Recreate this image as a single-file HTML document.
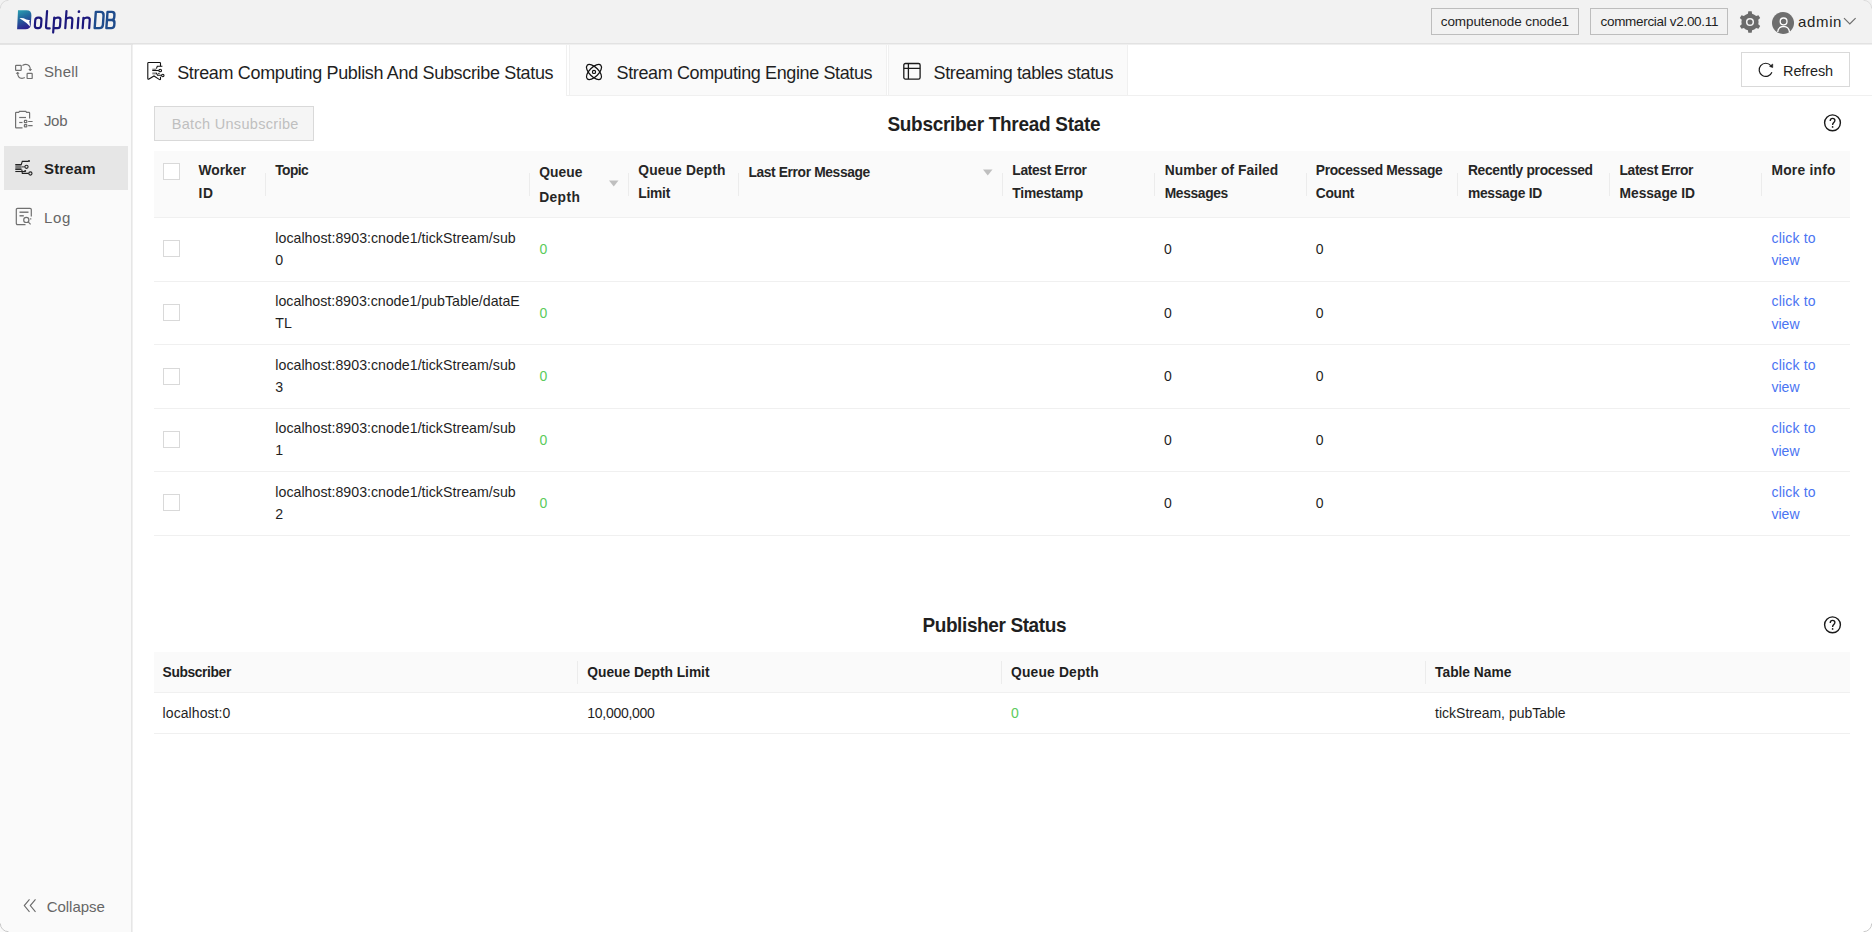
<!DOCTYPE html><html><head><meta charset='utf-8'><style>
*{box-sizing:border-box;margin:0;padding:0}
html,body{width:1872px;height:932px;overflow:hidden;background:#fff;font-family:"Liberation Sans",sans-serif;color:#1f1f1f}
.a{position:absolute}
.t{position:absolute;white-space:nowrap;line-height:1;font-family:"Liberation Sans",sans-serif}
svg{position:absolute;overflow:visible}
</style></head><body>
<div class=a style="left:0;top:0;width:1872px;height:43px;background:#f2f2f2"></div>
<div class=a style="left:0;top:43px;width:1872px;height:1px;background:#e2e2e2"></div>
<div class=a style="left:1431px;top:8px;width:148px;height:27px;border:1px solid #bdbdbd"></div>
<div class=a style="left:1590px;top:8px;width:138px;height:27px;border:1px solid #bdbdbd"></div>
<div class=a style="left:0;top:44px;width:131px;height:888px;background:#fafafa"></div>
<div class=a style="left:131px;top:44px;width:1px;height:888px;background:#e6e6e6"></div>
<div class=a style="left:132px;top:45px;width:1px;height:887px;background:#f0f0f0"></div>
<div class=a style="left:4px;top:146px;width:124px;height:44px;background:#e6e6e6"></div>
<div class=a style="left:566px;top:95px;width:1306px;height:1px;background:#f0f0f0"></div>
<div class=a style="left:566px;top:44px;width:1px;height:52px;background:#f0f0f0"></div>
<div class=a style="left:569px;top:44px;width:318px;height:52px;background:#fafafa;border:1px solid #f0f0f0"></div>
<div class=a style="left:888px;top:44px;width:240px;height:52px;background:#fafafa;border:1px solid #f0f0f0"></div>
<div class=a style="left:1741px;top:52px;width:109px;height:35px;border:1px solid #d9d9d9;background:#fff"></div>
<div class=a style="left:0;top:44px;width:133px;height:1px;background:#e4e4e4"></div>
<div class=a style="left:133px;top:44px;width:1739px;height:1px;background:#efefef"></div>
<div class=a style="left:154px;top:106px;width:160px;height:35px;border:1px solid #d9d9d9;background:#f5f5f5"></div>
<div class=a style="left:154px;top:151px;width:1696px;height:67px;background:#fafafa;border-bottom:1px solid #f0f0f0"></div>
<div class=a style="left:265px;top:173px;width:1px;height:23px;background:#ececec"></div>
<div class=a style="left:529px;top:173px;width:1px;height:23px;background:#ececec"></div>
<div class=a style="left:628px;top:173px;width:1px;height:23px;background:#ececec"></div>
<div class=a style="left:738px;top:173px;width:1px;height:23px;background:#ececec"></div>
<div class=a style="left:1002px;top:173px;width:1px;height:23px;background:#ececec"></div>
<div class=a style="left:1154px;top:173px;width:1px;height:23px;background:#ececec"></div>
<div class=a style="left:1306px;top:173px;width:1px;height:23px;background:#ececec"></div>
<div class=a style="left:1457px;top:173px;width:1px;height:23px;background:#ececec"></div>
<div class=a style="left:1609px;top:173px;width:1px;height:23px;background:#ececec"></div>
<div class=a style="left:1761px;top:173px;width:1px;height:23px;background:#ececec"></div>
<div class=a style="left:163px;top:163px;width:17px;height:17px;border:1px solid #d9d9d9;background:#fff"></div>
<div class=a style="left:154px;top:281px;width:1696px;height:1px;background:#f0f0f0"></div>
<div class=a style="left:163px;top:240px;width:17px;height:17px;border:1px solid #d9d9d9;background:#fff"></div>
<div class=a style="left:154px;top:344px;width:1696px;height:1px;background:#f0f0f0"></div>
<div class=a style="left:163px;top:304px;width:17px;height:17px;border:1px solid #d9d9d9;background:#fff"></div>
<div class=a style="left:154px;top:408px;width:1696px;height:1px;background:#f0f0f0"></div>
<div class=a style="left:163px;top:368px;width:17px;height:17px;border:1px solid #d9d9d9;background:#fff"></div>
<div class=a style="left:154px;top:471px;width:1696px;height:1px;background:#f0f0f0"></div>
<div class=a style="left:163px;top:431px;width:17px;height:17px;border:1px solid #d9d9d9;background:#fff"></div>
<div class=a style="left:154px;top:535px;width:1696px;height:1px;background:#f0f0f0"></div>
<div class=a style="left:163px;top:494px;width:17px;height:17px;border:1px solid #d9d9d9;background:#fff"></div>
<svg style="left:609px;top:180px" width="10" height="7" viewBox="0 0 10 7"><path d="M0 0.5h9.5L4.75 6.5z" fill="#bfbfbf"/></svg>
<svg style="left:983px;top:168.5px" width="10" height="7" viewBox="0 0 10 7"><path d="M0 0.5h9.5L4.75 6.5z" fill="#bfbfbf"/></svg>
<div class=a style="left:154px;top:652px;width:1696px;height:41px;background:#fafafa;border-bottom:1px solid #f0f0f0"></div>
<div class=a style="left:577px;top:661px;width:1px;height:23px;background:#ececec"></div>
<div class=a style="left:1001px;top:661px;width:1px;height:23px;background:#ececec"></div>
<div class=a style="left:1425px;top:661px;width:1px;height:23px;background:#ececec"></div>
<div class=a style="left:154px;top:733px;width:1696px;height:1px;background:#f0f0f0"></div>
<!-- logo -->
<svg style="left:0;top:0" width="130" height="44" viewBox="0 0 130 44">
  <defs>
    <linearGradient id="lg" x1="0" y1="0" x2="0.3" y2="1">
      <stop offset="0" stop-color="#2aa3b2"/>
      <stop offset="0.45" stop-color="#236a9e"/>
      <stop offset="1" stop-color="#2b2590"/>
    </linearGradient>
  </defs>
  <path d="M18 10.2 H26.5 Q31.6 10.2 31.4 15.5 L30.8 24.5 Q30.5 29.3 25.5 29.3 H17.1 Z" fill="url(#lg)"/>
  <path d="M19.4 18.2 Q23 17.6 26.2 19.5 L30 20.2 L29.2 21.6 Q30.2 24.5 29.8 26.6 Q27 22.5 19.4 18.2 Z" fill="#fff"/>
  <g transform="translate(0 29.3) skewX(-4) translate(0 -29.3)" fill="none" stroke-width="2.2" stroke-linecap="round" stroke-linejoin="round">
   <g stroke="#1c187c">
    <rect x="34.6" y="17.6" width="6.2" height="10.6" rx="2.6"/>
    <path d="M45.8 11 V26.4 Q45.8 28.3 47.8 28.4 H49.6"/>
    <path d="M53.4 17.7 V32.6 M53.4 19.6 Q54.4 17.6 56.6 17.6 H57.6 Q59.8 17.6 59.8 20 V25.8 Q59.8 28.2 57.6 28.2 H53.6"/>
    <path d="M65.2 11 V28.2 M65.2 19.6 Q66.2 17.6 68.4 17.6 H69.4 Q71.7 17.6 71.7 20 V28.2"/>
    <path d="M77.6 17.8 V28.2"/>
    <path d="M82.6 17.8 V28.2 M82.6 19.6 Q83.6 17.6 85.8 17.6 H86.8 Q89.1 17.6 89.1 20 V28.2"/>
   </g>
   <circle cx="77.7" cy="11.7" r="1.35" fill="#1c187c"/>
   <g stroke="#1f4c8c" stroke-width="2.4">
    <path d="M94.6 11.9 H99.2 Q102.6 11.9 102.6 15.4 V24.7 Q102.6 28.1 99.2 28.1 H94.6 Z"/>
    <path d="M106.3 11.9 H110.6 Q113.4 11.9 113.4 14.7 V17.2 Q113.4 20 110.6 20 H106.3 Z M106.3 20 H111.2 Q114 20 114 23 V25.3 Q114 28.1 111.2 28.1 H106.3 Z"/>
   </g>
  </g>
</svg>
<!-- gear -->
<svg style="left:1738px;top:10px" width="24" height="24" viewBox="0 0 24 24">
  <path fill="#6b6b6b" d="M9.90 3.66L10.32 1.23L13.68 1.23L14.10 3.66A8.6 8.6 0 0 1 18.17 6.01L20.49 5.16L22.17 8.07L20.27 9.65A8.6 8.6 0 0 1 20.27 14.35L22.17 15.93L20.49 18.84L18.17 17.99A8.6 8.6 0 0 1 14.10 20.34L13.68 22.77L10.32 22.77L9.90 20.34A8.6 8.6 0 0 1 5.83 17.99L3.51 18.84L1.83 15.93L3.73 14.35A8.6 8.6 0 0 1 3.73 9.65L1.83 8.07L3.51 5.16L5.83 6.01A8.6 8.6 0 0 1 9.90 3.66Z"/>
  <circle cx="12" cy="12" r="3.3" fill="none" stroke="#f2f2f2" stroke-width="1.5"/>
</svg>
<!-- avatar -->
<svg style="left:1771px;top:11px" width="24" height="24" viewBox="0 0 24 24">
  <circle cx="12" cy="12" r="11" fill="#6e6e6e"/>
  <circle cx="12.6" cy="10.4" r="3.4" fill="none" stroke="#fff" stroke-width="1.3"/>
  <path d="M6.7 21 Q7.3 15.6 12.6 15.4 Q17.9 15.6 18.5 21" fill="none" stroke="#fff" stroke-width="1.3"/>
</svg>
<!-- chevron -->
<svg style="left:1843px;top:17px" width="14" height="9" viewBox="0 0 14 9">
  <path d="M1 1.2 L6.8 7 L12.6 1.2" fill="none" stroke="#6e6e6e" stroke-width="1.2"/>
</svg>
<!-- shell icon -->
<svg style="left:12px;top:60px" width="24" height="24" viewBox="0 0 24 24" fill="none" stroke="#707070" stroke-width="1.2">
  <rect x="3.6" y="5.3" width="5.6" height="5.1" rx="0.6"/>
  <rect x="15.1" y="13.4" width="5.1" height="5.1" rx="0.6"/>
  <path d="M10.4 5.5 Q14.5 3 17.3 6 Q18.4 7.5 18.3 10"/>
  <path d="M16.8 9 L18.3 11 L19.6 9" fill="#707070" stroke-width="0.8"/>
  <path d="M5.6 12.6 Q5.5 18.3 10 18.3 Q11.8 18.3 12.8 17.6"/>
  <path d="M4.2 13.8 L5.6 12 L7 13.8" fill="#707070" stroke-width="0.8"/>
</svg>
<!-- job icon -->
<svg style="left:12px;top:107px" width="24" height="24" viewBox="0 0 24 24" fill="none" stroke="#707070" stroke-width="1.2">
  <path d="M10.5 20.8 H4.2 Q3.6 20.8 3.6 20.2 V6 Q3.6 5.4 4.2 5.4 H6.7 L7.5 4.4 H13.8 L14.6 5.4 H17 Q17.6 5.4 17.6 6 V11.5"/>
  <path d="M7.2 10.5 H14"/>
  <path d="M7.2 15.5 H10.5"/>
  <rect x="12.4" y="13.4" width="2.4" height="2.3" rx="0.5"/>
  <rect x="12.4" y="17.6" width="2.4" height="2.3" rx="0.5"/>
  <path d="M16.2 14.5 H20.6 M16.2 18.7 H20.6"/>
</svg>
<!-- stream icon -->
<svg style="left:12px;top:156px" width="24" height="24" viewBox="0 0 24 24" fill="none" stroke="#222" stroke-width="1">
  <rect x="3.3" y="8.6" width="6.2" height="4.8" fill="#7a7a7a" stroke="none"/>
  <path d="M9.5 10.8 H12.9" stroke="#7a7a7a" stroke-width="1.6"/>
  <path d="M3.3 8.5 H9.3 L10.3 5.4 H16.5" stroke-width="1.1"/>
  <circle cx="17" cy="5" r="1" fill="#222" stroke="none"/>
  <circle cx="14.5" cy="10.8" r="1.6" stroke-width="1.1"/>
  <path d="M3.3 13.4 H9.5" stroke-width="1.1"/>
  <path d="M3.3 15.5 H13" stroke-width="1.1"/>
  <circle cx="13.2" cy="15" r="1" fill="#222" stroke="none"/>
  <path d="M9.8 13.6 L10.3 17.4 H16.7" stroke-width="1.1"/>
  <circle cx="18.4" cy="17.5" r="1.6" stroke-width="1.1"/>
</svg>
<!-- log icon -->
<svg style="left:12px;top:204px" width="24" height="24" viewBox="0 0 24 24" fill="none" stroke="#707070" stroke-width="1.2">
  <path d="M13.5 20.6 H5.6 Q4.3 20.6 4.3 19.3 V5.6 Q4.3 4.3 5.6 4.3 H18 Q19.3 4.3 19.3 5.6 V12.6"/>
  <path d="M7.5 8.2 H16.5" stroke-width="1.4"/>
  <path d="M7.5 11.8 H11.8" stroke-width="1.4"/>
  <circle cx="14.3" cy="15.9" r="2.6"/>
  <path d="M16.2 17.9 L18.6 20.3"/>
  <path d="M18.7 14.3 V15.4" />
</svg>
<!-- collapse -->
<svg style="left:22px;top:897px" width="16" height="17" viewBox="0 0 16 17" fill="none" stroke="#6a6a6a" stroke-width="1.1">
  <path d="M7.5 2.3 L2.3 8.6 L7.5 14.8"/>
  <path d="M13.5 2.3 L8.3 8.6 L13.5 14.8"/>
</svg>
<!-- tab1 icon -->
<svg style="left:143px;top:58px" width="24" height="24" viewBox="0 0 24 24" fill="none" stroke="#111" stroke-width="1.1">
  <path d="M17.5 8.2 V5.3 Q17.5 4.5 16.7 4.5 H5.6 Q4.8 4.5 4.8 5.3 V20.6 Q4.8 21.8 6 21 L11 18 L16.5 21.6 Q17.5 22 17.5 21 V18.8"/>
  <path d="M19.4 8.3 H14.3 L13.4 10.6"/>
  <rect x="9.3" y="10.6" width="3.8" height="2" fill="#888" stroke="none"/>
  <path d="M9.3 12.5 H15.8"/>
  <circle cx="17.2" cy="12.5" r="1.3"/>
  <rect x="9.3" y="14.4" width="3.8" height="2" fill="#888" stroke="none"/>
  <path d="M13.3 14.7 L14.5 17.3 H18.6"/>
  <circle cx="19.8" cy="17.5" r="1.2"/>
  <circle cx="15.9" cy="15.5" r="0.7" fill="#111" stroke="none"/>
</svg>
<!-- tab2 atom icon -->
<svg style="left:582px;top:60px" width="24" height="24" viewBox="0 0 24 24" fill="none" stroke="#111" stroke-width="1.2">
  <ellipse cx="12" cy="12" rx="9.6" ry="4.6" transform="rotate(45 12 12)"/>
  <ellipse cx="12" cy="12" rx="9.6" ry="4.6" transform="rotate(-45 12 12)"/>
  <circle cx="12" cy="11.9" r="1.6"/>
</svg>
<!-- tab3 table icon -->
<svg style="left:900px;top:59px" width="24" height="24" viewBox="0 0 24 24" fill="none" stroke="#1a1a1a" stroke-width="1.3">
  <rect x="3.8" y="4.5" width="16.3" height="15.6" rx="1.6"/>
  <path d="M3.8 9.4 H20.1 M8.4 4.5 V20.1"/>
</svg>
<!-- refresh icon -->
<svg style="left:1754px;top:58px" width="24" height="24" viewBox="0 0 24 24" fill="none" stroke="#1a1a1a" stroke-width="1.2">
  <path d="M17.9 14.2 A6.6 6.6 0 1 1 16.8 7.6"/>
  <path d="M18.7 6 V9.6 L15.6 8.4 Z" fill="#1a1a1a" stroke-width="0.6"/>
</svg>
<!-- help icons -->
<svg style="left:1823px;top:114px" width="19" height="18" viewBox="0 0 19 18" fill="none" stroke="#1a1a1a" stroke-width="1.25">
  <circle cx="9.5" cy="8.8" r="7.9" stroke-width="1.4"/>
  <path d="M7.2 7 Q7.3 4.4 9.6 4.4 Q11.9 4.4 11.9 6.6 Q11.9 7.7 10.7 8.6 Q9.6 9.4 9.6 10.9" stroke-width="1.35"/>
  <circle cx="9.6" cy="12.9" r="0.85" fill="#1a1a1a" stroke="none"/>
</svg>
<svg style="left:1823px;top:616px" width="19" height="18" viewBox="0 0 19 18" fill="none" stroke="#1a1a1a" stroke-width="1.25">
  <circle cx="9.5" cy="8.8" r="7.9" stroke-width="1.4"/>
  <path d="M7.2 7 Q7.3 4.4 9.6 4.4 Q11.9 4.4 11.9 6.6 Q11.9 7.7 10.7 8.6 Q9.6 9.4 9.6 10.9" stroke-width="1.35"/>
  <circle cx="9.6" cy="12.9" r="0.85" fill="#1a1a1a" stroke="none"/>
</svg>
<!-- window corners -->
<svg style="left:0;top:0" width="10" height="10" viewBox="0 0 10 10"><path d="M0.3 8.5 A8.2 8.2 0 0 1 8.5 0.3" fill="none" stroke="#d9d9d9" stroke-width="0.9"/></svg>
<svg style="left:1862px;top:0" width="10" height="10" viewBox="0 0 10 10"><path d="M1.5 0.3 A8.2 8.2 0 0 1 9.7 8.5" fill="none" stroke="#d9d9d9" stroke-width="0.9"/></svg>
<svg style="left:0;top:922px" width="10" height="10" viewBox="0 0 10 10"><path d="M0.3 1.5 A8.2 8.2 0 0 0 8.5 9.7" fill="none" stroke="#c4c4c4" stroke-width="0.9"/></svg>
<svg style="left:1862px;top:922px" width="10" height="10" viewBox="0 0 10 10"><path d="M9.7 1.5 A8.2 8.2 0 0 1 1.5 9.7" fill="none" stroke="#c4c4c4" stroke-width="0.9"/></svg>

<span class=t id="hd1" style="left:1440.80px;top:15.27px;font-size:13.5px;color:#1f1f1f;letter-spacing:-0.094px;">computenode cnode1</span>
<span class=t id="hd2" style="left:1600.50px;top:15.27px;font-size:13.5px;color:#1f1f1f;letter-spacing:-0.311px;">commercial v2.00.11</span>
<span class=t id="hd3" style="left:1798.00px;top:14.10px;font-size:15px;color:#1f1f1f;letter-spacing:0.650px;">admin</span>
<span class=t id="sb1" style="left:43.90px;top:64.30px;font-size:15px;color:#666666;letter-spacing:0.200px;">Shell</span>
<span class=t id="sb2" style="left:43.90px;top:113.10px;font-size:15px;color:#666666;letter-spacing:-0.300px;">Job</span>
<span class=t id="sb3" style="left:44.00px;top:161.40px;font-size:15px;color:#1f1f1f;font-weight:700;letter-spacing:0.160px;">Stream</span>
<span class=t id="sb4" style="left:44.00px;top:209.70px;font-size:15px;color:#666666;letter-spacing:0.600px;">Log</span>
<span class=t id="sb5" style="left:46.70px;top:899.10px;font-size:15px;color:#666666;letter-spacing:-0.028px;">Collapse</span>
<span class=t id="tb1" style="left:177.20px;top:63.66px;font-size:18px;color:#1f1f1f;letter-spacing:-0.337px;transform:scaleY(1.06);transform-origin:0 15.24px;">Stream Computing Publish And Subscribe Status</span>
<span class=t id="tb2" style="left:616.60px;top:63.76px;font-size:18px;color:#1f1f1f;letter-spacing:-0.387px;transform:scaleY(1.06);transform-origin:0 15.24px;">Stream Computing Engine Status</span>
<span class=t id="tb3" style="left:933.60px;top:63.96px;font-size:18px;color:#1f1f1f;letter-spacing:-0.372px;transform:scaleY(1.06);transform-origin:0 15.24px;">Streaming tables status</span>
<span class=t id="rf" style="left:1783.10px;top:63.53px;font-size:14.5px;color:#1f1f1f;letter-spacing:-0.134px;">Refresh</span>
<span class=t id="bu" style="left:171.70px;top:116.53px;font-size:14.5px;color:#bfbfbf;letter-spacing:0.312px;">Batch Unsubscribe</span>
<span class=t id="st1" style="left:887.40px;top:114.92px;font-size:19px;color:#1f1f1f;font-weight:700;letter-spacing:-0.291px;transform:scaleY(1.09);transform-origin:0 16.08px;">Subscriber Thread State</span>
<span class=t id="st2" style="left:922.40px;top:615.62px;font-size:19px;color:#1f1f1f;font-weight:700;letter-spacing:-0.386px;transform:scaleY(1.09);transform-origin:0 16.08px;">Publisher Status</span>
<span class=t id="h0_0" style="left:198.40px;top:163.92px;font-size:13.8px;color:#262626;font-weight:700;letter-spacing:0.040px;">Worker</span>
<span class=t id="h0_1" style="left:198.40px;top:187.02px;font-size:13.8px;color:#262626;font-weight:700;letter-spacing:0.800px;">ID</span>
<span class=t id="h1_0" style="left:275.30px;top:163.92px;font-size:13.8px;color:#262626;font-weight:700;letter-spacing:-0.600px;">Topic</span>
<span class=t id="h2_0" style="left:539.20px;top:165.52px;font-size:13.8px;color:#262626;font-weight:700;letter-spacing:0.100px;">Queue</span>
<span class=t id="h2_1" style="left:539.20px;top:191.12px;font-size:13.8px;color:#262626;font-weight:700;letter-spacing:0.400px;">Depth</span>
<span class=t id="h3_0" style="left:638.30px;top:163.92px;font-size:13.8px;color:#262626;font-weight:700;letter-spacing:0.140px;">Queue Depth</span>
<span class=t id="h3_1" style="left:638.30px;top:186.72px;font-size:13.8px;color:#262626;font-weight:700;letter-spacing:-0.250px;">Limit</span>
<span class=t id="h4_0" style="left:748.40px;top:165.52px;font-size:13.8px;color:#262626;font-weight:700;letter-spacing:-0.364px;">Last Error Message</span>
<span class=t id="h5_0" style="left:1012.30px;top:163.92px;font-size:13.8px;color:#262626;font-weight:700;letter-spacing:-0.327px;">Latest Error</span>
<span class=t id="h5_1" style="left:1012.30px;top:187.02px;font-size:13.8px;color:#262626;font-weight:700;letter-spacing:-0.200px;">Timestamp</span>
<span class=t id="h6_0" style="left:1164.70px;top:163.92px;font-size:13.8px;color:#262626;font-weight:700;letter-spacing:0.053px;">Number of Failed</span>
<span class=t id="h6_1" style="left:1164.70px;top:187.02px;font-size:13.8px;color:#262626;font-weight:700;letter-spacing:-0.343px;">Messages</span>
<span class=t id="h7_0" style="left:1315.80px;top:163.92px;font-size:13.8px;color:#262626;font-weight:700;letter-spacing:-0.312px;">Processed Message</span>
<span class=t id="h7_1" style="left:1315.80px;top:187.02px;font-size:13.8px;color:#262626;font-weight:700;letter-spacing:-0.300px;">Count</span>
<span class=t id="h8_0" style="left:1467.90px;top:163.92px;font-size:13.8px;color:#262626;font-weight:700;letter-spacing:-0.306px;">Recently processed</span>
<span class=t id="h8_1" style="left:1467.90px;top:187.02px;font-size:13.8px;color:#262626;font-weight:700;letter-spacing:-0.267px;">message ID</span>
<span class=t id="h9_0" style="left:1619.60px;top:163.92px;font-size:13.8px;color:#262626;font-weight:700;letter-spacing:-0.400px;">Latest Error</span>
<span class=t id="h9_1" style="left:1619.60px;top:187.02px;font-size:13.8px;color:#262626;font-weight:700;letter-spacing:-0.067px;">Message ID</span>
<span class=t id="h10_0" style="left:1771.50px;top:163.92px;font-size:13.8px;color:#262626;font-weight:700;letter-spacing:0.224px;">More info</span>
<span class=t id="r0t0" style="left:275.30px;top:230.98px;font-size:14.2px;color:#1f1f1f;letter-spacing:0.018px;">localhost:8903:cnode1/tickStream/sub</span>
<span class=t id="r0t1" style="left:275.30px;top:252.98px;font-size:14.2px;color:#1f1f1f;">0</span>
<span class=t id="r0g" style="left:539.40px;top:242.15px;font-size:14px;color:#5ccb5c;">0</span>
<span class=t id="r0n1" style="left:1164.00px;top:242.05px;font-size:14px;color:#1f1f1f;">0</span>
<span class=t id="r0n2" style="left:1315.80px;top:242.05px;font-size:14px;color:#1f1f1f;">0</span>
<span class=t id="r0c1" style="left:1771.50px;top:230.95px;font-size:14px;color:#4a74f2;letter-spacing:0.171px;">click to</span>
<span class=t id="r0c2" style="left:1771.50px;top:253.15px;font-size:14px;color:#4a74f2;">view</span>
<span class=t id="r1t0" style="left:275.30px;top:294.48px;font-size:14.2px;color:#1f1f1f;">localhost:8903:cnode1/pubTable/dataE</span>
<span class=t id="r1t1" style="left:275.30px;top:316.48px;font-size:14.2px;color:#1f1f1f;">TL</span>
<span class=t id="r1g" style="left:539.40px;top:305.65px;font-size:14px;color:#5ccb5c;">0</span>
<span class=t id="r1n1" style="left:1164.00px;top:305.55px;font-size:14px;color:#1f1f1f;">0</span>
<span class=t id="r1n2" style="left:1315.80px;top:305.55px;font-size:14px;color:#1f1f1f;">0</span>
<span class=t id="r1c1" style="left:1771.50px;top:294.45px;font-size:14px;color:#4a74f2;letter-spacing:0.171px;">click to</span>
<span class=t id="r1c2" style="left:1771.50px;top:316.65px;font-size:14px;color:#4a74f2;">view</span>
<span class=t id="r2t0" style="left:275.30px;top:357.98px;font-size:14.2px;color:#1f1f1f;letter-spacing:0.018px;">localhost:8903:cnode1/tickStream/sub</span>
<span class=t id="r2t1" style="left:275.30px;top:379.98px;font-size:14.2px;color:#1f1f1f;">3</span>
<span class=t id="r2g" style="left:539.40px;top:369.15px;font-size:14px;color:#5ccb5c;">0</span>
<span class=t id="r2n1" style="left:1164.00px;top:369.05px;font-size:14px;color:#1f1f1f;">0</span>
<span class=t id="r2n2" style="left:1315.80px;top:369.05px;font-size:14px;color:#1f1f1f;">0</span>
<span class=t id="r2c1" style="left:1771.50px;top:357.95px;font-size:14px;color:#4a74f2;letter-spacing:0.171px;">click to</span>
<span class=t id="r2c2" style="left:1771.50px;top:380.15px;font-size:14px;color:#4a74f2;">view</span>
<span class=t id="r3t0" style="left:275.30px;top:421.48px;font-size:14.2px;color:#1f1f1f;letter-spacing:0.018px;">localhost:8903:cnode1/tickStream/sub</span>
<span class=t id="r3t1" style="left:275.30px;top:443.48px;font-size:14.2px;color:#1f1f1f;">1</span>
<span class=t id="r3g" style="left:539.40px;top:432.65px;font-size:14px;color:#5ccb5c;">0</span>
<span class=t id="r3n1" style="left:1164.00px;top:432.55px;font-size:14px;color:#1f1f1f;">0</span>
<span class=t id="r3n2" style="left:1315.80px;top:432.55px;font-size:14px;color:#1f1f1f;">0</span>
<span class=t id="r3c1" style="left:1771.50px;top:421.45px;font-size:14px;color:#4a74f2;letter-spacing:0.171px;">click to</span>
<span class=t id="r3c2" style="left:1771.50px;top:443.65px;font-size:14px;color:#4a74f2;">view</span>
<span class=t id="r4t0" style="left:275.30px;top:484.98px;font-size:14.2px;color:#1f1f1f;letter-spacing:0.018px;">localhost:8903:cnode1/tickStream/sub</span>
<span class=t id="r4t1" style="left:275.30px;top:506.98px;font-size:14.2px;color:#1f1f1f;">2</span>
<span class=t id="r4g" style="left:539.40px;top:496.15px;font-size:14px;color:#5ccb5c;">0</span>
<span class=t id="r4n1" style="left:1164.00px;top:496.05px;font-size:14px;color:#1f1f1f;">0</span>
<span class=t id="r4n2" style="left:1315.80px;top:496.05px;font-size:14px;color:#1f1f1f;">0</span>
<span class=t id="r4c1" style="left:1771.50px;top:484.95px;font-size:14px;color:#4a74f2;letter-spacing:0.171px;">click to</span>
<span class=t id="r4c2" style="left:1771.50px;top:507.15px;font-size:14px;color:#4a74f2;">view</span>
<span class=t id="p0" style="left:162.60px;top:665.82px;font-size:13.8px;color:#1f1f1f;font-weight:700;letter-spacing:-0.378px;">Subscriber</span>
<span class=t id="p1" style="left:587.30px;top:665.82px;font-size:13.8px;color:#1f1f1f;font-weight:700;letter-spacing:-0.026px;">Queue Depth Limit</span>
<span class=t id="p2" style="left:1011.10px;top:665.82px;font-size:13.8px;color:#1f1f1f;font-weight:700;letter-spacing:0.180px;">Queue Depth</span>
<span class=t id="p3" style="left:1435.10px;top:665.82px;font-size:13.8px;color:#1f1f1f;font-weight:700;letter-spacing:-0.022px;">Table Name</span>
<span class=t id="q0" style="left:162.60px;top:705.95px;font-size:14px;color:#1f1f1f;letter-spacing:0.080px;">localhost:0</span>
<span class=t id="q1" style="left:587.30px;top:705.95px;font-size:14px;color:#1f1f1f;letter-spacing:-0.289px;">10,000,000</span>
<span class=t id="q2" style="left:1011.10px;top:705.95px;font-size:14px;color:#5ccb5c;">0</span>
<span class=t id="q3" style="left:1435.10px;top:705.95px;font-size:14px;color:#1f1f1f;letter-spacing:-0.010px;">tickStream, pubTable</span>
</body></html>
